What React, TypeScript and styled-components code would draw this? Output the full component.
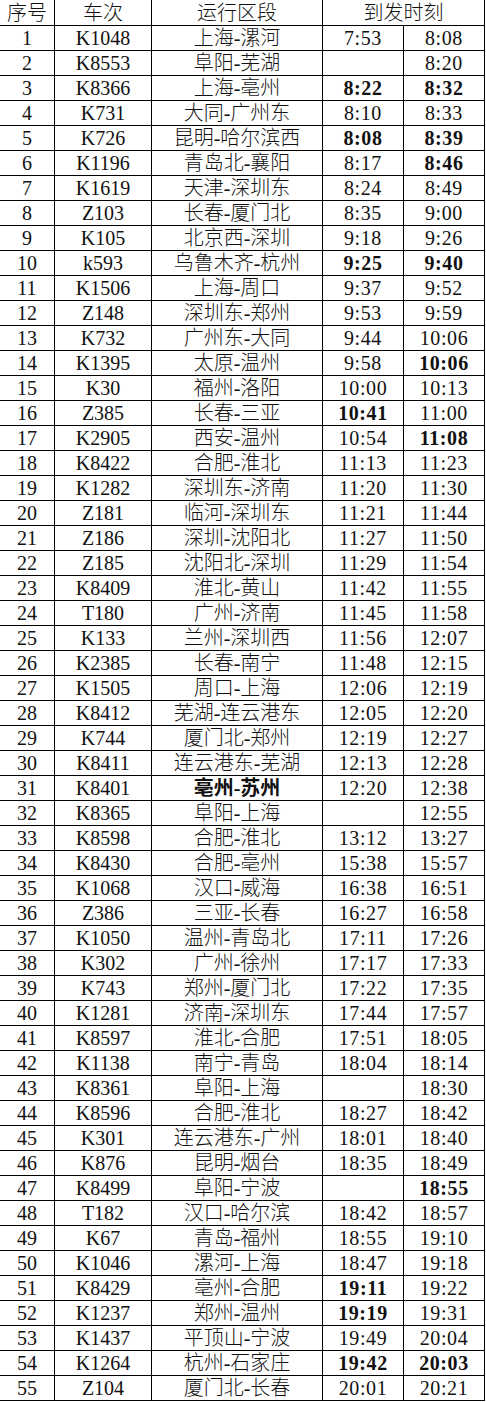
import React from "react";
import styled, { createGlobalStyle } from "styled-components";

const GlobalStyle = createGlobalStyle`
    html, body {
        margin: 0;
        padding: 0;
        background: #ffffff;
    }
    body {
        font-family: "Liberation Serif", "Noto Sans CJK SC", serif;
        color: #111;
    }
`;

type Train = {
    no: string;
    route: string;
    arr: string;
    dep: string;
    // which cells are printed bold
    b?: { route?: boolean; arr?: boolean; dep?: boolean };
};

const trains: Train[] = [
    { no: "K1048", route: "上海-漯河", arr: "7:53", dep: "8:08" },
    { no: "K8553", route: "阜阳-芜湖", arr: "", dep: "8:20" },
    { no: "K8366", route: "上海-亳州", arr: "8:22", dep: "8:32", b: { arr: true, dep: true } },
    { no: "K731", route: "大同-广州东", arr: "8:10", dep: "8:33" },
    { no: "K726", route: "昆明-哈尔滨西", arr: "8:08", dep: "8:39", b: { arr: true, dep: true } },
    { no: "K1196", route: "青岛北-襄阳", arr: "8:17", dep: "8:46", b: { dep: true } },
    { no: "K1619", route: "天津-深圳东", arr: "8:24", dep: "8:49" },
    { no: "Z103", route: "长春-厦门北", arr: "8:35", dep: "9:00" },
    { no: "K105", route: "北京西-深圳", arr: "9:18", dep: "9:26" },
    { no: "k593", route: "乌鲁木齐-杭州", arr: "9:25", dep: "9:40", b: { arr: true, dep: true } },
    { no: "K1506", route: "上海-周口", arr: "9:37", dep: "9:52" },
    { no: "Z148", route: "深圳东-郑州", arr: "9:53", dep: "9:59" },
    { no: "K732", route: "广州东-大同", arr: "9:44", dep: "10:06" },
    { no: "K1395", route: "太原-温州", arr: "9:58", dep: "10:06", b: { dep: true } },
    { no: "K30", route: "福州-洛阳", arr: "10:00", dep: "10:13" },
    { no: "Z385", route: "长春-三亚", arr: "10:41", dep: "11:00", b: { arr: true } },
    { no: "K2905", route: "西安-温州", arr: "10:54", dep: "11:08", b: { dep: true } },
    { no: "K8422", route: "合肥-淮北", arr: "11:13", dep: "11:23" },
    { no: "K1282", route: "深圳东-济南", arr: "11:20", dep: "11:30" },
    { no: "Z181", route: "临河-深圳东", arr: "11:21", dep: "11:44" },
    { no: "Z186", route: "深圳-沈阳北", arr: "11:27", dep: "11:50" },
    { no: "Z185", route: "沈阳北-深圳", arr: "11:29", dep: "11:54" },
    { no: "K8409", route: "淮北-黄山", arr: "11:42", dep: "11:55" },
    { no: "T180", route: "广州-济南", arr: "11:45", dep: "11:58" },
    { no: "K133", route: "兰州-深圳西", arr: "11:56", dep: "12:07" },
    { no: "K2385", route: "长春-南宁", arr: "11:48", dep: "12:15" },
    { no: "K1505", route: "周口-上海", arr: "12:06", dep: "12:19" },
    { no: "K8412", route: "芜湖-连云港东", arr: "12:05", dep: "12:20" },
    { no: "K744", route: "厦门北-郑州", arr: "12:19", dep: "12:27" },
    { no: "K8411", route: "连云港东-芜湖", arr: "12:13", dep: "12:28" },
    { no: "K8401", route: "亳州-苏州", arr: "12:20", dep: "12:38", b: { route: true } },
    { no: "K8365", route: "阜阳-上海", arr: "", dep: "12:55" },
    { no: "K8598", route: "合肥-淮北", arr: "13:12", dep: "13:27" },
    { no: "K8430", route: "合肥-亳州", arr: "15:38", dep: "15:57" },
    { no: "K1068", route: "汉口-威海", arr: "16:38", dep: "16:51" },
    { no: "Z386", route: "三亚-长春", arr: "16:27", dep: "16:58" },
    { no: "K1050", route: "温州-青岛北", arr: "17:11", dep: "17:26" },
    { no: "K302", route: "广州-徐州", arr: "17:17", dep: "17:33" },
    { no: "K743", route: "郑州-厦门北", arr: "17:22", dep: "17:35" },
    { no: "K1281", route: "济南-深圳东", arr: "17:44", dep: "17:57" },
    { no: "K8597", route: "淮北-合肥", arr: "17:51", dep: "18:05" },
    { no: "K1138", route: "南宁-青岛", arr: "18:04", dep: "18:14" },
    { no: "K8361", route: "阜阳-上海", arr: "", dep: "18:30" },
    { no: "K8596", route: "合肥-淮北", arr: "18:27", dep: "18:42" },
    { no: "K301", route: "连云港东-广州", arr: "18:01", dep: "18:40" },
    { no: "K876", route: "昆明-烟台", arr: "18:35", dep: "18:49" },
    { no: "K8499", route: "阜阳-宁波", arr: "", dep: "18:55", b: { dep: true } },
    { no: "T182", route: "汉口-哈尔滨", arr: "18:42", dep: "18:57" },
    { no: "K67", route: "青岛-福州", arr: "18:55", dep: "19:10" },
    { no: "K1046", route: "漯河-上海", arr: "18:47", dep: "19:18" },
    { no: "K8429", route: "亳州-合肥", arr: "19:11", dep: "19:22", b: { arr: true } },
    { no: "K1237", route: "郑州-温州", arr: "19:19", dep: "19:31", b: { arr: true } },
    { no: "K1437", route: "平顶山-宁波", arr: "19:49", dep: "20:04" },
    { no: "K1264", route: "杭州-石家庄", arr: "19:42", dep: "20:03", b: { arr: true, dep: true } },
    { no: "Z104", route: "厦门北-长春", arr: "20:01", dep: "20:21" },
];

const App = () => {
    return (
        <>
            <GlobalStyle />
            <Sheet>
                <HeadRow>
                    <Cell>序号</Cell>
                    <Cell>车次</Cell>
                    <Cell>运行区段</Cell>
                    <Cell $span={2}>到发时刻</Cell>
                </HeadRow>
                {trains.map((t, i) => (
                    <Row key={t.no + i}>
                        <Cell>{i + 1}</Cell>
                        <Cell>{t.no}</Cell>
                        <Cell $bold={t.b?.route}>{t.route}</Cell>
                        <Cell $time $bold={t.b?.arr}>{t.arr}</Cell>
                        <Cell $time $bold={t.b?.dep}>{t.dep}</Cell>
                    </Row>
                ))}
            </Sheet>
        </>
    );
};

export default App;

const Sheet = styled.div`
    display: flex;
    flex-direction: column;
    width: 485px;
`;

const Row = styled.div`
    display: grid;
    grid-template-columns: 55px 97px 171px 81px 81px;
    height: 25px;
`;

const HeadRow = styled(Row)`
    height: 26px;
`;

const Cell = styled.div<{ $bold?: boolean; $span?: number; $time?: boolean }>`
    box-sizing: border-box;
    grid-column: span ${(p) => p.$span || 1};
    display: flex;
    align-items: flex-end;
    justify-content: center;
    padding-bottom: 1px;
    border-right: 1px solid #000;
    border-bottom: 1px solid #000;
    font-size: 20px;
    line-height: 22px;
    font-weight: ${(p) => (p.$bold ? 700 : 300)};
    letter-spacing: ${(p) => (p.$time ? "0.6px" : "0")};
    white-space: nowrap;
    overflow: hidden;
`;
